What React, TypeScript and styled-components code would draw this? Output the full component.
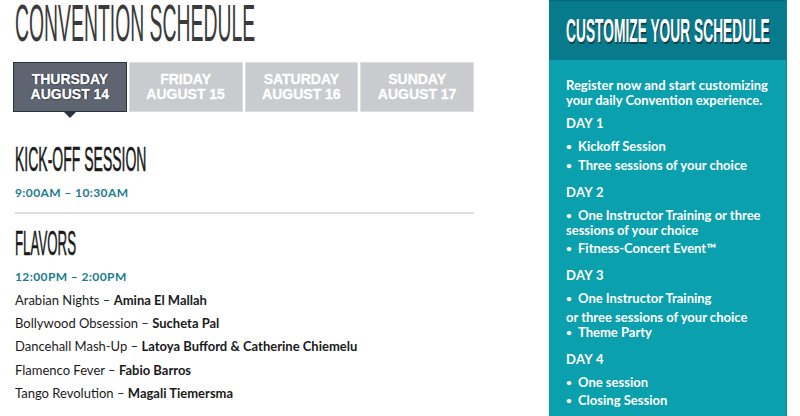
import React from "react";
import styled, { createGlobalStyle } from "styled-components";

const GlobalStyle = createGlobalStyle`
  html, body {
    margin: 0;
    padding: 0;
    background: #ffffff;
  }
  body {
    font-family: "Lato", "Open Sans", sans-serif;
  }
`;

const Page = styled.div`
  display: flex;
  width: 800px;
  height: 416px;
  overflow: hidden;
`;

const Main = styled.div`
  width: 459px;
  flex-shrink: 0;
  padding-left: 15px;
  min-width: 0;
`;

// condensed display type: a wide face squeezed horizontally
const Condensed = styled.span<{ $scale: number }>`
  display: inline-block;
  white-space: nowrap;
  transform: scaleX(${(p) => p.$scale});
  transform-origin: left center;
`;

const Title = styled.h1`
  margin: 0;
  height: 54px;
  font-family: "Liberation Sans", Arial, sans-serif;
  font-weight: normal;
  font-size: 51px;
  line-height: 48px;
  color: #3a3a3a;
`;

const Tabs = styled.div`
  display: flex;
  gap: 2px;
  margin: 8px 0 0 -2px;
  width: 461px;
`;

const Tab = styled.div<{ $active?: boolean }>`
  position: relative;
  flex: 1;
  height: 50px;
  box-sizing: border-box;
  display: flex;
  flex-direction: column;
  align-items: center;
  justify-content: center;
  font-family: "Liberation Sans", Arial, sans-serif;
  font-weight: bold;
  font-size: 14px;
  line-height: 15px;
  color: #ffffff;
  -webkit-text-stroke: 0.4px #ffffff;
  background: ${(p) => (p.$active ? "#5e6570" : "#c9cbce")};
  border: 1px solid ${(p) => (p.$active ? "#2a323d" : "#dcdee0")};
  text-shadow: ${(p) =>
    p.$active
      ? "1px 0 0 #2a323d, -1px 0 0 #2a323d, 0 1px 0 #2a323d, 0 -1px 0 #2a323d"
      : "0 0 1px #b5b8bc"};

  &::after {
    content: "";
    display: ${(p) => (p.$active ? "block" : "none")};
    position: absolute;
    left: 50%;
    bottom: -7px;
    margin-left: -6px;
    border-left: 6px solid transparent;
    border-right: 6px solid transparent;
    border-top: 6px solid #2a323d;
  }
`;

const Session = styled.section<{ $first?: boolean }>`
  padding-top: ${(p) => (p.$first ? "32px" : "14px")};
  padding-bottom: 12px;
  border-bottom: 2px solid #dedede;
`;

const SessionTitle = styled.h2`
  margin: 0;
  height: 30px;
  font-family: "Liberation Sans", Arial, sans-serif;
  font-weight: normal;
  font-size: 35px;
  line-height: 30px;
  color: #1a1a1a;
  -webkit-text-stroke: 0.6px #1a1a1a;
`;

const Time = styled.div`
  margin-top: 11px;
  font-family: "Lato", sans-serif;
  font-weight: bold;
  font-size: 12px;
  line-height: 15px;
  letter-spacing: 0.4px;
  color: #1a7c8e;
`;

const ClassList = styled.ul`
  list-style: none;
  margin: 9px 0 0;
  padding: 0;
`;

const ClassItem = styled.li`
  font-family: "Lato", sans-serif;
  font-size: 13px;
  line-height: 15px;
  color: #1a1a1a;
  margin-bottom: 8.2px;

  b {
    font-weight: bold;
  }
`;

const Sidebar = styled.aside`
  margin-left: 75px;
  width: 237px;
  flex-shrink: 0;
  background: #0aa0ad;
  border-right: 1px solid #0c8893;
  color: #ffffff;
  font-family: "Lato", sans-serif;
  font-weight: bold;
  font-size: 13px;
  line-height: 15px;
`;

const SidebarHeader = styled.div`
  height: 60px;
  background: #077b8b;
  border-top: 1px solid #056876;
  box-sizing: border-box;
  padding-left: 17px;
  display: flex;
  align-items: center;
  font-family: "Liberation Sans", Arial, sans-serif;
  font-weight: bold;
  font-size: 34px;
  text-shadow: 2px 2px 0 #0b3f4a;
`;

const SidebarBody = styled.div`
  padding: 18px 8px 0 17px;
`;

const Intro = styled.p`
  margin: 0;
`;

const DayHeading = styled.div<{ $first?: boolean }>`
  margin-top: ${(p) => (p.$first ? "8px" : "12px")};
  letter-spacing: 0.3px;
`;

const DayList = styled.div`
  margin-top: 8px;
  display: flex;
  flex-direction: column;
  gap: 3.5px;
`;

const DayLine = styled.div``;

const Bullet = styled.span`
  display: inline-block;
  width: 12px;
  font-size: 10px;
  vertical-align: 1px;
`;

const classes: [string, string][] = [
  ["Arabian Nights", "Amina El Mallah"],
  ["Bollywood Obsession", "Sucheta Pal"],
  ["Dancehall Mash-Up", "Latoya Bufford & Catherine Chiemelu"],
  ["Flamenco Fever", "Fabio Barros"],
  ["Tango Revolution", "Magali Tiemersma"],
];

const days = [
  { day: "THURSDAY", date: "AUGUST 14", active: true },
  { day: "FRIDAY", date: "AUGUST 15" },
  { day: "SATURDAY", date: "AUGUST 16" },
  { day: "SUNDAY", date: "AUGUST 17" },
];

const Dot = () => <Bullet>•</Bullet>;

const App: React.FC = () => {
  return (
    <>
      <GlobalStyle />
      <Page>
        <Main>
          <Title>
            <Condensed $scale={0.38}>CONVENTION SCHEDULE</Condensed>
          </Title>
          <Tabs>
            {days.map((d) => (
              <Tab key={d.day} $active={d.active}>
                <span>{d.day}</span>
                <span>{d.date}</span>
              </Tab>
            ))}
          </Tabs>

          <Session $first>
            <SessionTitle>
              <Condensed $scale={0.4}>KICK-OFF SESSION</Condensed>
            </SessionTitle>
            <Time>9:00AM – 10:30AM</Time>
          </Session>

          <Session>
            <SessionTitle>
              <Condensed $scale={0.38}>FLAVORS</Condensed>
            </SessionTitle>
            <Time>12:00PM – 2:00PM</Time>
            <ClassList>
              {classes.map(([name, who]) => (
                <ClassItem key={name}>
                  {name} – <b>{who}</b>
                </ClassItem>
              ))}
            </ClassList>
          </Session>
        </Main>

        <Sidebar>
          <SidebarHeader>
            <Condensed $scale={0.405}>CUSTOMIZE YOUR SCHEDULE</Condensed>
          </SidebarHeader>
          <SidebarBody>
            <Intro>
              Register now and start customizing
              <br />
              your daily Convention experience.
            </Intro>

            <DayHeading $first>DAY 1</DayHeading>
            <DayList>
              <DayLine><Dot />Kickoff Session</DayLine>
              <DayLine><Dot />Three sessions of your choice</DayLine>
            </DayList>

            <DayHeading>DAY 2</DayHeading>
            <DayList>
              <DayLine>
                <Dot />One Instructor Training or three
                <br />
                sessions of your choice
              </DayLine>
              <DayLine><Dot />Fitness-Concert Event™</DayLine>
            </DayList>

            <DayHeading>DAY 3</DayHeading>
            <DayList>
              <DayLine><Dot />One Instructor Training</DayLine>
              <DayLine>
                or three sessions of your choice
                <br />
                <Dot />Theme Party
              </DayLine>
            </DayList>

            <DayHeading>DAY 4</DayHeading>
            <DayList>
              <DayLine><Dot />One session</DayLine>
              <DayLine><Dot />Closing Session</DayLine>
            </DayList>
          </SidebarBody>
        </Sidebar>
      </Page>
    </>
  );
};

export default App;
